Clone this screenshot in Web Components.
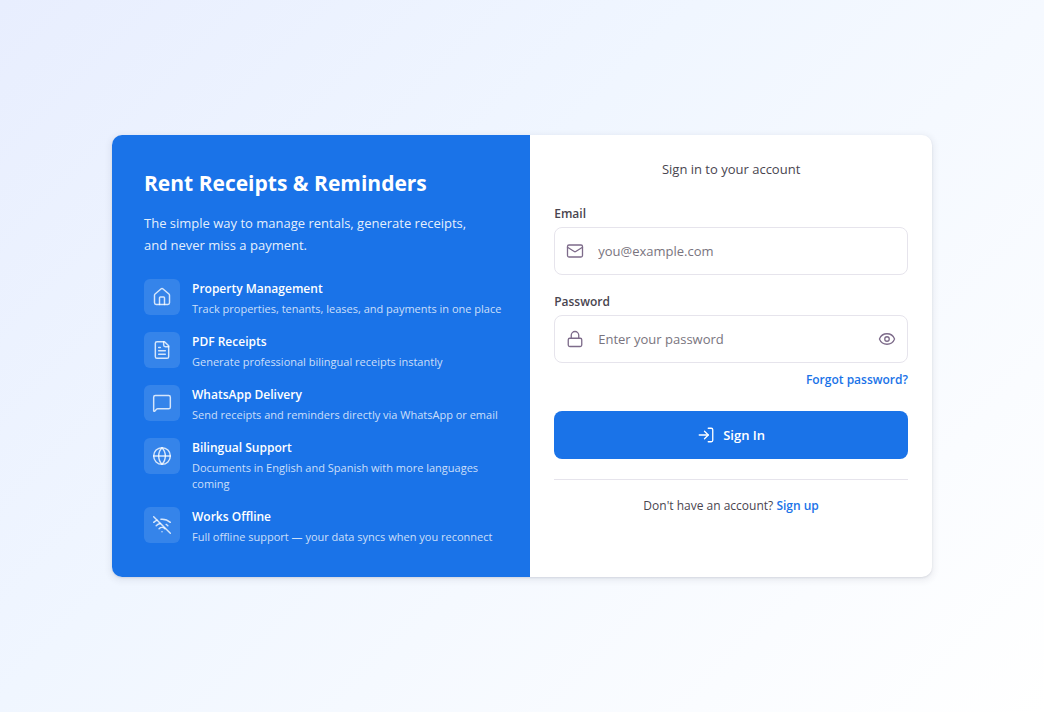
<!DOCTYPE html>
<html lang="en">
<head>
<meta charset="utf-8">
<meta name="viewport" content="width=device-width, initial-scale=1">
<title>Rent Receipts &amp; Reminders</title>
<style>
  :root {
    --blue: #1a73e8;
    --ink: #49454f;
    --muted: #79747e;
    --line: #e6e4ec;
  }
  html { height: 100%; }
  body {
    margin: 0;
    min-height: 100%;
    display: flex;
    background: linear-gradient(135deg, #e8f0fe 0%, #f0f7ff 50%, #ffffff 100%);
    background: linear-gradient(135deg, #e8eefe 0%, #f0f6ff 40%, #ffffff 100%);
    font-family: "Open Sans", "Noto Sans", sans-serif;
    color: var(--ink);
  }
</style>
</head>
<body>
<login-page>
  <promo-panel slot="promo" heading="Rent Receipts &amp; Reminders">
    The simple way to manage rentals, generate receipts, and never miss a payment.
    <feature-item slot="features" icon="home" name="Property Management">Track properties, tenants, leases, and payments in one place</feature-item>
    <feature-item slot="features" icon="file" name="PDF Receipts">Generate professional bilingual receipts instantly</feature-item>
    <feature-item slot="features" icon="chat" name="WhatsApp Delivery">Send receipts and reminders directly via WhatsApp or email</feature-item>
    <feature-item slot="features" icon="globe" name="Bilingual Support">Documents in English and Spanish with more languages coming</feature-item>
    <feature-item slot="features" icon="offline" name="Works Offline">Full offline support — your data syncs when you reconnect</feature-item>
  </promo-panel>
  <sign-in-form slot="form"></sign-in-form>
</login-page>

<script>
const ICONS = {
  home: '<path d="M15 21v-8a1 1 0 0 0-1-1h-4a1 1 0 0 0-1 1v8"/><path d="M3 10a2 2 0 0 1 .709-1.528l7-5.999a2 2 0 0 1 2.582 0l7 5.999A2 2 0 0 1 21 10v9a2 2 0 0 1-2 2H5a2 2 0 0 1-2-2z"/>',
  file: '<path d="M15 2H6a2 2 0 0 0-2 2v16a2 2 0 0 0 2 2h12a2 2 0 0 0 2-2V7Z"/><path d="M14 2v4a2 2 0 0 0 2 2h4"/><path d="M10 9H8"/><path d="M16 13H8"/><path d="M16 17H8"/>',
  chat: '<path d="M22 17a2 2 0 0 1-2 2H6.828a2 2 0 0 0-1.414.586l-2.202 2.202A.71.71 0 0 1 2 21.286V5a2 2 0 0 1 2-2h16a2 2 0 0 1 2 2z"/>',
  globe: '<circle cx="12" cy="12" r="10"/><path d="M12 2a14.5 14.5 0 0 0 0 20 14.5 14.5 0 0 0 0-20"/><path d="M2 12h20"/>',
  offline: '<path d="M12 20h.01"/><path d="M8.5 16.429a5 5 0 0 1 7 0"/><path d="M5 12.859a10 10 0 0 1 5.17-2.69"/><path d="M19 12.859a10 10 0 0 0-2.007-1.523"/><path d="M2 8.82a15 15 0 0 1 4.177-2.643"/><path d="M22 8.82a15 15 0 0 0-11.288-3.764"/><path d="m2 2 20 20"/>',
  mail: '<rect width="20" height="16" x="2" y="4" rx="2"/><path d="m22 7-8.97 5.7a1.94 1.94 0 0 1-2.06 0L2 7"/>',
  lock: '<rect width="18" height="11" x="3" y="11" rx="2"/><path d="M7 11V7a5 5 0 0 1 10 0v4"/>',
  eye: '<path d="M2.062 12.348a1 1 0 0 1 0-.696 10.75 10.75 0 0 1 19.876 0 1 1 0 0 1 0 .696 10.75 10.75 0 0 1-19.876 0"/><circle cx="12" cy="12" r="3"/>',
  login: '<path d="M15 3h4a2 2 0 0 1 2 2v14a2 2 0 0 1-2 2h-4"/><path d="m10 17 5-5-5-5"/><path d="M15 12H3"/>'
};

class LineIcon extends HTMLElement {
  connectedCallback() {
    if (this.shadowRoot) return;
    this.attachShadow({ mode: 'open' }).innerHTML = `
      <style>
        :host { display: block; flex: none; width: 20px; height: 20px; }
        svg { display: block; width: 100%; height: 100%; fill: none; stroke: currentColor;
              stroke-width: var(--stroke, 1.75); stroke-linecap: round; stroke-linejoin: round; }
      </style>
      <svg viewBox="0 0 24 24" aria-hidden="true">${ICONS[this.getAttribute('name')]}</svg>`;
  }
}

class LoginPage extends HTMLElement {
  connectedCallback() {
    this.attachShadow({ mode: 'open' }).innerHTML = `
      <style>
        :host { display: flex; flex: 1; align-items: center; justify-content: center; padding: 16px; }
        main { display: grid; grid-template-columns: 51fr 49fr; flex: 1; max-width: 820px;
               border-radius: 10px; overflow: hidden; background: #fff;
               box-shadow: 0 2px 6px 2px rgba(60, 64, 90, .08), 0 1px 2px rgba(60, 64, 90, .12); }
      </style>
      <main><slot name="promo"></slot><slot name="form"></slot></main>`;
  }
}

class PromoPanel extends HTMLElement {
  connectedCallback() {
    this.attachShadow({ mode: 'open' }).innerHTML = `
      <style>
        :host { display: block; padding: 32px 24px 32px 32px; background: var(--blue); color: #fff; }
        h1 { margin: 0 0 13px; font-size: 21px; line-height: 32px; font-weight: 700; }
        p { max-width: 340px; margin: 0 0 23px; font-size: 13px; line-height: 22px; color: rgba(255,255,255,.9); }
        .list { display: grid; gap: 15px; }
      </style>
      <h1></h1><p><slot></slot></p>
      <div class="list"><slot name="features"></slot></div>`;
    this.shadowRoot.querySelector('h1').textContent = this.getAttribute('heading');
  }
}

class FeatureItem extends HTMLElement {
  connectedCallback() {
    this.attachShadow({ mode: 'open' }).innerHTML = `
      <style>
        :host { display: flex; align-items: flex-start; gap: 12px; }
        .tile { display: grid; place-items: center; flex: none; width: 36px; height: 36px;
                border-radius: 6px; background: rgba(255,255,255,.12); color: rgba(255,255,255,.8); }
        h2 { margin: 0 0 2px; font-size: 12px; line-height: 20px; font-weight: 600; }
        p { margin: 0; font-size: 11px; line-height: 16px; color: rgba(255,255,255,.78); }
      </style>
      <div class="tile"><line-icon name="${this.getAttribute('icon')}"></line-icon></div>
      <div><h2></h2><p><slot></slot></p></div>`;
    this.shadowRoot.querySelector('h2').textContent = this.getAttribute('name');
  }
}

class SignInForm extends HTMLElement {
  connectedCallback() {
    this.attachShadow({ mode: 'open' }).innerHTML = `
      <style>
        :host { display: block; padding: 24px; }
        .intro { margin: 0 0 24px; text-align: center; font-size: 13px; line-height: 20px; }
        label { display: block; margin-bottom: 2px; font-size: 12px; line-height: 22px; font-weight: 600; }
        .box { display: flex; align-items: center; gap: 14px; height: 48px; box-sizing: border-box;
               padding: 0 11px; border: 1px solid var(--line); border-radius: 8px; color: #7d6b8a; }
        .box + label { margin-top: 16px; }
        input { flex: 1; min-width: 0; padding: 0; border: 0; outline: 0; background: none;
                font: inherit; font-size: 13px; line-height: 20px; color: var(--ink); }
        input::placeholder { color: var(--muted); opacity: 1; }
        .eye { padding: 0; border: 0; background: none; color: inherit; }
        a { color: var(--blue); font-weight: 600; text-decoration: none; }
        .forgot { margin: 8px 0 0; text-align: right; font-size: 12px; line-height: 18px; }
        .submit { display: flex; align-items: center; justify-content: center; gap: 8px; width: 100%;
                  height: 48px; margin: 22px 0 20px; padding: 0; border: 0; border-radius: 8px;
                  background: var(--blue); color: #fff; font: inherit; font-size: 13px; font-weight: 600; }
        .signup { margin: 0; padding-top: 16px; border-top: 1px solid var(--line);
                  text-align: center; font-size: 12px; line-height: 20px; }
        .small { width: 18px; height: 18px; }
      </style>
      <form>
        <p class="intro">Sign in to your account</p>
        <label for="email">Email</label>
        <div class="box"><line-icon class="small" name="mail"></line-icon>
          <input id="email" type="email" placeholder="you@example.com"></div>
        <label for="password">Password</label>
        <div class="box"><line-icon class="small" name="lock"></line-icon>
          <input id="password" type="password" placeholder="Enter your password">
          <button class="eye" type="button" aria-label="Show password"><line-icon class="small" name="eye"></line-icon></button></div>
        <p class="forgot"><a href="#forgot">Forgot password?</a></p>
        <button class="submit" type="submit"><line-icon class="small" name="login"></line-icon><span>Sign In</span></button>
        <p class="signup">Don't have an account? <a href="#signup">Sign up</a></p>
      </form>`;
  }
}

customElements.define('line-icon', LineIcon);
customElements.define('login-page', LoginPage);
customElements.define('promo-panel', PromoPanel);
customElements.define('feature-item', FeatureItem);
customElements.define('sign-in-form', SignInForm);
</script>
</body>
</html>
